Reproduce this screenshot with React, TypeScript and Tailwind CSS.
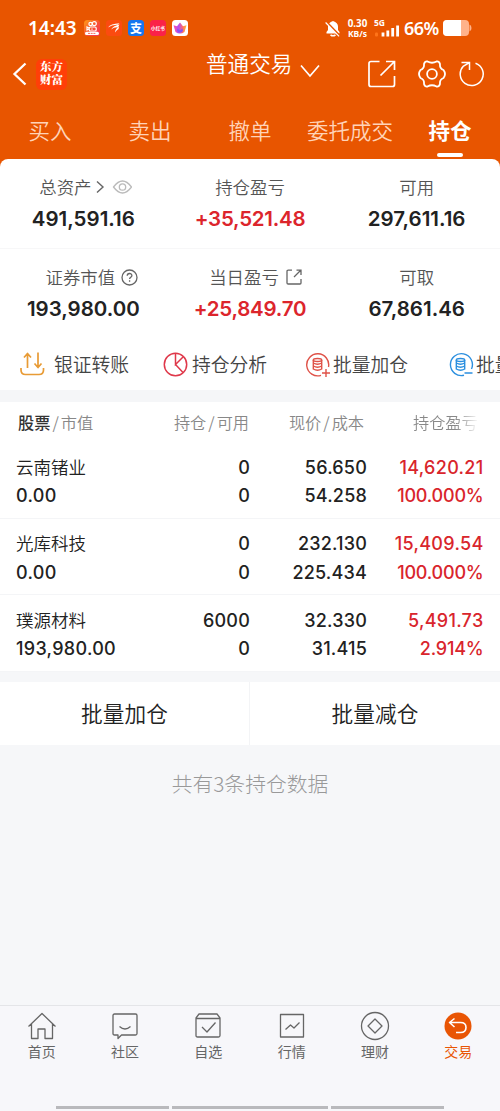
import type { ReactNode } from "react";

const cjk = "font-['Noto_Sans_CJK_SC',sans-serif]";
const inter = "font-['Inter','Noto_Sans_CJK_SC',sans-serif] [font-optical-sizing:none]";

function StatusBar() {
  return (
    <div className="flex h-14 items-center pl-7 pr-[28px] font-['Noto_Sans',sans-serif] text-white">
      <span className="w-14 text-[19px] font-semibold leading-none">14:43</span>
      <div className="flex gap-[6px]">
        <svg className="h-4 w-4" viewBox="0 0 16 16">
          <defs>
            <linearGradient id="warm" x1="0" x2="1" y1="0" y2="1">
              <stop stopColor="#ff9d16" />
              <stop offset=".55" stopColor="#f84e37" />
              <stop offset="1" stopColor="#f72e5a" />
            </linearGradient>
          </defs>
          <rect width="16" height="16" rx="3.5" fill="url(#warm)" />
          <g fill="none" stroke="#fff" strokeWidth="1.2">
            <circle cx="6.6" cy="4" r="1.7" />
            <circle cx="10.3" cy="3.7" r="2" />
            <rect x="5.2" y="7" width="7" height="4" rx="1.3" />
            <path d="m5 8-2-1v3l2-1M8 8.4v1.4" />
          </g>
          <rect x="1" y="11.8" width="14" height="3.2" rx="1.6" fill="#fff" />
          <path d="M4 13.4h8" stroke="#f75b4a" strokeWidth=".9" strokeDasharray="2 .7" />
        </svg>
        <svg className="h-4 w-4" viewBox="0 0 16 16">
          <rect width="16" height="16" rx="3.5" fill="#fb4b10" />
          <path d="M2 7.500Q4.500 3.500 13.500 3.200L11.800 4.800Q6 4.500 2 7.500ZM5 9.500Q7.500 5.800 13.500 4.600L12 7.200Q8 7 5 9.500ZM9 12.500Q9.200 8.500 13 6.500L12.500 9Q10.500 10 9 12.500Z" fill="#fff" />
        </svg>
        <span className={`flex h-4 w-4 items-center justify-center rounded-[3.5px] bg-[#1677ef] text-[12px] font-bold leading-none ${cjk}`}>支</span>
        <span className={`flex h-4 w-4 items-center justify-center whitespace-nowrap rounded-[3.5px] bg-[#fa2248] text-[4.600px] font-bold leading-none ${cjk}`}>小红书</span>
        <svg className="h-4 w-4" viewBox="0 0 16 16">
          <defs>
            <linearGradient id="lotus">
              <stop stopColor="#ff4da6" />
              <stop offset=".4" stopColor="#b44df1" />
              <stop offset=".7" stopColor="#ff6a68" />
              <stop offset="1" stopColor="#ffbd2e" />
            </linearGradient>
          </defs>
          <rect width="16" height="16" rx="3.5" fill="#fff" />
          <path d="M1.500 5.200 5 6.200 8 2.500l3 3.700 3.500-1L12.500 12q-4.500 3-9 0Z" fill="url(#lotus)" />
          <path d="m5 11 .5-2.500L8 10.500l2.500-2L11 11q-3 3-6 0Z" fill="#8553ef" />
        </svg>
      </div>
      <div className="ml-auto flex items-center">
        <svg className="mr-[6px] h-[17px] w-4" viewBox="0 0 16 17">
          <path d="M1.500 13.500V12L3 10V6.500Q3 2.500 8 1q5 1.500 5 5.500V10l1.500 2v1.500Z" fill="#fff" />
          <path d="M5.500 14.800q2.500 2 5 0" fill="none" stroke="#fff" strokeWidth="1.500" />
          <path d="m1.500 2 13.500 14" stroke="#e85500" strokeWidth="2" />
          <path d="m.6 2.500 13.500 13.800" stroke="#fff" strokeWidth="1.200" />
        </svg>
        <div className="mr-[6px] flex w-[21px] flex-col items-center whitespace-nowrap font-bold">
          <div className="text-[9.800px] leading-[10px]">0.30</div>
          <div className="text-[8.500px] leading-[9px]">KB/s</div>
        </div>
        <div className="mr-[4px] flex w-[26px] flex-col">
          <span className="text-[8.500px] font-bold leading-[8px]">5G</span>
          <svg className="-mt-[2px] h-[12px] w-[26px]" viewBox="0 0 26 12">
            <path d="M9 11.500v-4M13.800 11.500v-6M18.700 11.500V3M23.600 11.500V.5" stroke="#fff" strokeWidth="2.800" />
            <rect x="1" y="7.500" width="3" height="4" rx="1" fill="#ff7419" />
          </svg>
        </div>
        <span className="w-[39px] whitespace-nowrap text-[18px] font-semibold leading-none tracking-[-0.600px]">66%</span>
        <svg className="h-4 w-[29px]" viewBox="0 0 29 16">
          <rect width="26" height="16" rx="4" fill="#ffb28a" />
          <path d="M26.500 4.500q2 .5 2 3.500t-2 3.500Z" fill="#ffb28a" />
          <path d="M4 0h14v16H4a4 4 0 0 1-4-4V4a4 4 0 0 1 4-4Z" fill="#fff" />
        </svg>
      </div>
    </div>
  );
}

function Header() {
  return (
    <header className={`flex h-9 items-center text-white ${cjk}`}>
      <svg className="ml-3 h-6 w-[15px]" viewBox="0 0 15 24" fill="none" stroke="currentColor" strokeWidth="2.300">
        <path d="M13.500 1.500 2.500 12l11 10.500" />
      </svg>
      <div className="ml-[9px] flex h-[31px] w-[31px] flex-col items-center justify-center rounded-md bg-[#ff3f08] pb-[2px] font-['Noto_Serif_CJK_SC','Noto_Sans_CJK_SC',serif] text-[11.500px] font-black leading-[13px]">
        <span>东方</span>
        <span>财富</span>
      </div>
      <div className="-mt-[22px] ml-[139px] flex items-center">
        <h1 className="whitespace-nowrap text-[21.600px] font-[350] leading-6">普通交易</h1>
        <svg className="mt-[16px] ml-[8px] h-[14px] w-5" viewBox="0 0 20 14" fill="none" stroke="currentColor" strokeWidth="1.700">
          <path d="m1 1.500 9 10.500 9-10.500" />
        </svg>
      </div>
      <svg className="ml-auto h-7 w-7 shrink-0" viewBox="0 0 28 28" fill="none" stroke="currentColor" strokeWidth="1.700">
        <path d="M11.500 1.500H3Q1 1.500 1 3.500V24.500Q1 26.500 3 26.500H24.500Q26.500 26.500 26.500 24.500V16M18 1.500h8.500V10M26 2 12.500 15.500" />
      </svg>
      <svg className="ml-[22px] h-[30px] w-7 shrink-0" viewBox="0 0 28 30" fill="none" stroke="currentColor" strokeWidth="1.800" strokeLinejoin="round">
        <path d="M9.500 2.500Q14 5 18.500 2.500Q21 2 22 5Q21.500 9.500 25.500 11Q28.500 15 25.500 19Q21.500 20.500 22 25Q21 28 18.500 27.500Q14 25 9.500 27.500Q7 28 6 25Q6.500 20.500 2.500 19Q-.5 15 2.500 11Q6.500 9.500 6 5Q7 2 9.500 2.500Z" />
        <circle cx="14" cy="15" r="4.900" />
      </svg>
      <svg className="ml-[13px] mr-[15px] h-[26px] w-[26px] shrink-0" viewBox="0 0 26 26" fill="none" stroke="currentColor" strokeWidth="1.500">
        <path d="M16.500 2.200A11.500 11.500 0 1 1 4.500 5L10 1.800M2.500 1.500H10.500V9" />
      </svg>
    </header>
  );
}

function Tabs() {
  return (
    <nav className={`grid h-[67px] grid-cols-5 pt-[23px] text-center text-[21.500px] font-[350] leading-[30px] text-[#ffd3b8] ${cjk}`}>
      <span>买入</span>
      <span>卖出</span>
      <span>撤单</span>
      <span className="whitespace-nowrap">委托成交</span>
      <span className="flex flex-col items-center font-bold text-white">
        持仓
        <i className="mt-[8px] h-1 w-[26px] rounded-full bg-white" />
      </span>
    </nav>
  );
}

function Metric({ label, value, icon, red }: { label: string; value: string; icon?: ReactNode; red?: boolean }) {
  return (
    <div className="flex flex-col items-center">
      <div className={`flex h-6 items-center whitespace-nowrap text-[17.400px] font-[350] leading-6 text-[#555] ${cjk}`}>
        {label}
        {icon}
      </div>
      <div className={`mt-[7px] h-[26px] text-[20.500px] font-semibold leading-[26px] ${inter} ${red ? "tracking-[-0.250px] text-[#dc252c]" : "text-[#222]"}`}>{value}</div>
    </div>
  );
}

function Summary() {
  return (
    <section className="rounded-t-lg bg-white">
      <div className="grid h-[90px] grid-cols-3 border-b border-[#f7f7f8] pt-4">
        <Metric
          label="总资产"
          value="491,591.16"
          icon={
            <svg className="-mr-[5px] ml-[5px] h-[14px] w-[36px]" viewBox="0 0 36 14" fill="none">
              <path d="m1 1.500 6 5.500-6 5.500" stroke="#666" strokeWidth="1.400" />
              <path d="M17.500 7q9-12 18 0-9 12-18 0Z" stroke="#bbb" strokeWidth="1.300" />
              <circle cx="26.500" cy="7" r="3.200" stroke="#bbb" strokeWidth="1.300" />
            </svg>
          }
        />
        <Metric label="持仓盈亏" value="+35,521.48" red />
        <Metric label="可用" value="297,611.16" />
      </div>
      <div className="grid h-[90px] grid-cols-3 pt-4">
        <Metric
          label="证券市值"
          value="193,980.00"
          icon={
            <svg className="-mr-[17px] ml-[6px] h-[17px] w-[17px]" viewBox="0 0 17 17" fill="none" stroke="#666" strokeWidth="1.300">
              <circle cx="8.500" cy="8.500" r="7.500" />
              <path d="M6.200 6.800c0-3 4.700-3 4.700-.3 0 1.700-2.300 1.700-2.300 3.500M8.600 11.300v1.500" />
            </svg>
          }
        />
        <Metric
          label="当日盈亏"
          value="+25,849.70"
          red
          icon={
            <svg className="-mr-[11px] ml-[7px] h-4 w-4" viewBox="0 0 16 16" fill="none" stroke="#666" strokeWidth="1.300">
              <path d="M6 1.200H2.200q-1.200 0-1.200 1.200V14q0 1 1.200 1H14q1 0 1-1V10M10.500 1.200H15V6M14.500 1.500 8 8" />
            </svg>
          }
        />
        <Metric label="可取" value="67,861.46" />
      </div>
    </section>
  );
}

function BatchIcon({ minus }: { minus?: boolean }) {
  return (
    <svg className="h-[25px] w-[25px] shrink-0" viewBox="0 0 25 25" fill="none" stroke={minus ? "#2b8fdf" : "#df5248"} strokeWidth="1.400">
      <path d={minus ? "M15 23.300A11 11 0 1 1 22.500 17M15.500 21h8" : "M15 23.300A11 11 0 1 1 22.500 15M16 21h8M20 17v8"} />
      <ellipse cx="11.500" cy="8" rx="4.200" ry="1.500" />
      <path d="M7.300 8v9q4.200 2.500 8.400 0v-9M7.300 11q4.200 2.500 8.400 0M7.300 14q4.200 2.500 8.400 0" />
    </svg>
  );
}

function QuickActions() {
  return (
    <div className={`flex h-[51px] items-center overflow-hidden whitespace-nowrap bg-white pb-px pl-5 text-[18.800px] font-[350] leading-[26px] text-[#444] ${cjk}`}>
      <div className="flex w-[143px] shrink-0 items-center gap-[9px]">
        <svg className="h-[25px] w-[25px]" viewBox="0 0 25 25" fill="none" stroke="#e89b35" strokeWidth="1.700" strokeLinejoin="round">
          <path d="M7.500 16V1.500M4 5.500l3.500-4L11 5.500M18 .5V15M14.500 11.500l3.500 4 3.500-4M1 16v2q0 4.500 4.500 4.500h13.500q4.500 0 4.500-4.500v-2" />
        </svg>
        银证转账
      </div>
      <div className="flex w-[143px] shrink-0 items-center gap-1">
        <svg className="h-[25px] w-[25px]" viewBox="0 0 25 25" fill="none" stroke="#df384a" strokeWidth="1.500">
          <circle cx="12.500" cy="12.500" r="11.200" />
          <path d="M12.500 1.300v11.200l8-8M12.500 12.500l7.500 8" />
        </svg>
        持仓分析
      </div>
      <div className="flex w-[143px] shrink-0 items-center gap-[2px]">
        <BatchIcon />
        批量加仓
      </div>
      <div className="flex shrink-0 items-center gap-[2px]">
        <BatchIcon minus />
        批量减仓
      </div>
    </div>
  );
}

const holdings = [
  ["云南锗业", "0.00", "0", "0", "56.650", "54.258", "14,620.21", "100.000%"],
  ["光库科技", "0.00", "0", "0", "232.130", "225.434", "15,409.54", "100.000%"],
  ["璞源材料", "193,980.00", "6000", "0", "32.330", "31.415", "5,491.73", "2.914%"],
];

function Holdings() {
  return (
    <section className="bg-white">
      <div className={`grid h-10 grid-cols-[100px_133px_115px_112px] items-center whitespace-nowrap pl-[18px] pt-px text-right text-[16.200px] font-[350] text-[#888] ${cjk}`}>
        <span className="text-left"><b className="font-medium text-[#333]">股票</b><i className="mx-[2px] not-italic">/</i>市值</span>
        <span className="pr-[2px]">持仓<i className="mx-[2px] not-italic">/</i>可用</span>
        <span className="pr-[2px]">现价<i className="mx-[2px] not-italic">/</i>成本</span>
        <span className="bg-linear-to-r from-[#888] from-80% to-[#eee] to-98% bg-clip-text pl-[47px] text-left text-transparent">持仓盈亏</span>
      </div>
      {holdings.map((h) => (
        <div key={h[0]} className={`grid h-[76.500px] grid-cols-[120px_114px_117px_116.500px] border-b border-[#f4f5f7] pl-4 pt-[11.500px] text-right text-[18px] font-medium leading-[28.500px] tracking-[0.200px] text-[#222] ${inter}`}>
          <div className="text-left">
            <div className={`-mt-px h-[29.500px] text-[17.500px] font-[350] tracking-normal ${cjk}`}>{h[0]}</div>
            <div className="tracking-[0.300px]">{h[1]}</div>
          </div>
          <div><div>{h[2]}</div><div>{h[3]}</div></div>
          <div><div>{h[4]}</div><div>{h[5]}</div></div>
          <div className="text-[#d9252c]">
            <div className="tracking-[0.300px]">{h[6]}</div>
            <div className="tracking-[-0.200px]">{h[7]}</div>
          </div>
        </div>
      ))}
    </section>
  );
}

function NavItem({ label, children, active }: { label: string; children: ReactNode; active?: boolean }) {
  return (
    <div className={`flex flex-col items-center pt-[5px] ${active ? "text-[#e95504]" : "text-[#666]"}`}>
      <svg className="h-[30px] w-[30px]" viewBox="0 0 30 30" fill="none" stroke="currentColor" strokeWidth="1.300" strokeLinejoin="round">{children}</svg>
      <span className={`-mt-px text-[14px] leading-[23px] ${cjk}`}>{label}</span>
    </div>
  );
}

export default function App() {
  return (
    <div className="flex h-[1111px] w-[500px] flex-col overflow-hidden bg-[#f6f7f9]">
      <div className="bg-[#e85500]">
        <StatusBar />
        <Header />
        <Tabs />
        <Summary />
      </div>
      <QuickActions />
      <div className="h-3 bg-[#f5f6f8]" />
      <Holdings />
      <div className={`mt-[10px] grid h-[63.500px] grid-cols-2 bg-white text-center text-[21.700px] font-[350] leading-[61px] text-[#222] ${cjk}`}>
        <div className="border-r border-[#f3f4f6]">批量加仓</div>
        <div>批量减仓</div>
      </div>
      <p className={`pt-[23px] text-center text-[20.800px] font-light leading-[30px] text-[#999] ${cjk}`}>共有3条持仓数据</p>
      <nav className="mt-auto grid h-[106px] grid-cols-6 grid-rows-[1fr_auto] border-t border-[#e4e5e8] bg-[#f7f7fa]">
        <NavItem label="首页">
          <path d="m1.500 15.500 13.500-13 13.500 13M4.500 13v14.500H11V18h7v9.500h7.500V13" />
        </NavItem>
        <NavItem label="社区">
          <path d="M4.500 3h21q1.500 0 1.500 1.500v18q0 1.500-1.500 1.500h-14L8 27.500V24H4.500Q3 24 3 22.500v-18Q3 3 4.500 3ZM9.500 15.500q5.500 5 11 0" />
        </NavItem>
        <NavItem label="自选">
          <path d="M6 3h18l3 4v17.500q0 1.500-1.500 1.500h-21Q3 26 3 24.500V7ZM3 7.500h24M9 16l5 5 8.500-9.500" />
        </NavItem>
        <NavItem label="行情">
          <path d="M3.500 3.500h23v22.500h-23ZM8.500 18.500l5-4.500 3.500 3 5.500-5.500" />
        </NavItem>
        <NavItem label="理财">
          <circle cx="15" cy="15" r="13.500" />
          <path d="m15 8 7 7-7 7-7-7Z" />
        </NavItem>
        <NavItem label="交易" active>
          <circle cx="15" cy="15" r="13.500" fill="#e95504" stroke="none" />
          <path d="m11.500 7.500-5 4 5 4.500M7 11.500h10.500q5.500 0 5.500 5t-5.500 5H13" stroke="#fff" strokeWidth="1.600" />
        </NavItem>
        <div className="col-span-6 flex items-end justify-center gap-[3px] pb-[2px]">
          <i className="h-[3px] w-[113px] bg-[#b9b9bc]" />
          <i className="h-[3px] w-[156px] bg-[#b9b9bc]" />
          <i className="h-[3px] w-[113px] bg-[#b9b9bc]" />
        </div>
      </nav>
    </div>
  );
}
